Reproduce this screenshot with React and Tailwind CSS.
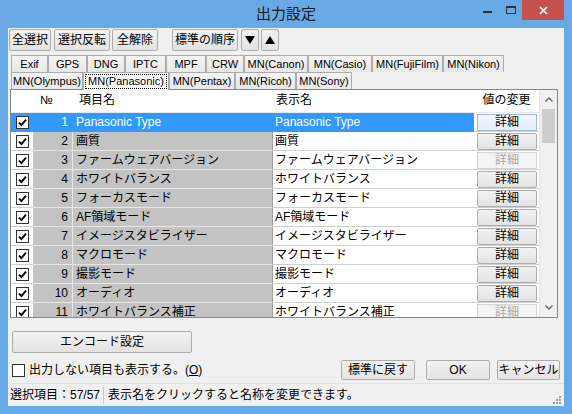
import React from "react";

const rows = [
  { no: 1, name: "Panasonic Type", selected: true },
  { no: 2, name: "画質" },
  { no: 3, name: "ファームウェアバージョン", disabled: true },
  { no: 4, name: "ホワイトバランス" },
  { no: 5, name: "フォーカスモード" },
  { no: 6, name: "AF領域モード" },
  { no: 7, name: "イメージスタビライザー" },
  { no: 8, name: "マクロモード" },
  { no: 9, name: "撮影モード" },
  { no: 10, name: "オーディオ" },
  { no: 11, name: "ホワイトバランス補正", disabled: true }
];

const tabsTop = [
  ["Exif", 37],
  ["GPS", 39],
  ["DNG", 38],
  ["IPTC", 41],
  ["MPF", 40],
  ["CRW", 38],
  ["MN(Canon)", 64],
  ["MN(Casio)", 64],
  ["MN(FujiFilm)", 71],
  ["MN(Nikon)", 61]
];

const tabsBottom = [
  ["MN(Olympus)", 72],
  ["MN(Panasonic)", 86],
  ["MN(Pentax)", 66],
  ["MN(Ricoh)", 61],
  ["MN(Sony)", 56]
];

function Btn({ className = "", children }) {
  return (
    <div
      className={`flex items-center justify-center border border-[#acacac] rounded-[2px] bg-linear-to-b from-[#f2f2f2] to-[#e3e3e3] text-black ${className}`}
    >
      {children}
    </div>
  );
}

function CheckBox({ checked }) {
  return (
    <div className="w-[13px] h-[13px] border border-[#333333] bg-white flex items-center justify-center shrink-0">
      {checked && (
        <svg width="9" height="9" viewBox="0 0 9 9">
          <path d="M1 4.6 L3.4 7 L8 1.6" stroke="#000" strokeWidth="1.9" fill="none" />
        </svg>
      )}
    </div>
  );
}

function Tab({ label, width, selected }) {
  return (
    <div
      style={{ width: width }}
      className={`shrink-0 flex items-center justify-center border-t border-l border-r border-[#acacac] text-[11px] whitespace-nowrap ${
        selected ? "bg-white relative z-10 h-[18px] -mb-[1px]" : "h-[17px] bg-linear-to-b from-[#f4f4f4] to-[#e8e8e8]"
      }`}
    >
      {selected ? (
        <span className="border border-dotted border-black px-[2px] leading-[13px]">{label}</span>
      ) : (
        label
      )}
    </div>
  );
}

export default function App() {
  return (
    <div className="w-[572px] h-[414px] bg-[#68aae6] flex flex-col font-['Liberation_Sans','Noto_Sans_CJK_JP',sans-serif] text-[12px] leading-none text-black overflow-hidden">
      {/* Title bar */}
      <div className="h-[28px] grid grid-cols-[1fr_auto_1fr] items-start">
        <div />
        <div className="pt-[6px] text-[15px] text-[#1a1a1a]">出力設定</div>
        <div className="flex justify-end items-start pr-[8px]">
          <div className="w-[26px] h-[20px] flex items-center justify-center">
            <div className="w-[9px] h-[2px] bg-[#333] mt-[4px]" />
          </div>
          <div className="w-[22px] h-[20px] flex items-center justify-center">
            <div className="w-[10px] h-[8px] border border-[#333] border-t-2" />
          </div>
          <div className="w-[42px] h-[20px] bg-[#c75050] flex items-center justify-center">
            <svg width="9" height="9" viewBox="0 0 9 9">
              <path d="M1 1 L8 8 M8 1 L1 8" stroke="#fff" strokeWidth="1.6" />
            </svg>
          </div>
        </div>
      </div>

      {/* Client area */}
      <div className="mx-[8px] h-[378px] bg-[#f0f0f0] flex flex-col">
        {/* Toolbar */}
        <div className="flex pl-[1px] pt-[1px]">
          <Btn className="w-[42px] h-[22px]">全選択</Btn>
          <Btn className="w-[56px] h-[22px] ml-[3px]">選択反転</Btn>
          <Btn className="w-[46px] h-[22px] ml-[2px]">全解除</Btn>
          <Btn className="w-[66px] h-[22px] ml-[14px]">標準の順序</Btn>
          <Btn className="w-[18px] h-[22px] ml-[3px]">
            <svg width="10" height="8" viewBox="0 0 10 8">
              <path d="M0 0 H10 L5 8 Z" fill="#000" />
            </svg>
          </Btn>
          <Btn className="w-[18px] h-[22px] ml-[2px]">
            <svg width="10" height="8" viewBox="0 0 10 8">
              <path d="M0 8 H10 L5 0 Z" fill="#000" />
            </svg>
          </Btn>
        </div>

        {/* Tabs */}
        <div className="mt-[4px] ml-[3px] flex">
          {tabsTop.map(function(t) {
            return <Tab key={t[0]} label={t[0]} width={t[1]} />;
          })}
        </div>
        <div className="ml-[3px] h-[17px] flex items-end">
          {tabsBottom.map(function(t) {
            return <Tab key={t[0]} label={t[0]} width={t[1]} selected={t[0] === "MN(Panasonic)"} />;
          })}
        </div>

        {/* List */}
        <div className="ml-[2px] w-[548px] h-[230px] border border-[#828790] bg-white flex overflow-hidden">
          <div className="w-[528px] flex flex-col overflow-hidden">
            <div className="h-[23px] shrink-0 flex items-center pb-[2px] border-b border-[#eaeaea]">
              <div className="w-[22px]" />
              <div className="w-[40px] pl-[7px]">№</div>
              <div className="w-[200px] pl-[6px]">項目名</div>
              <div className="w-[201px] pl-[3px]">表示名</div>
              <div className="w-[65px] text-center">値の変更</div>
            </div>
            {rows.map(function(r) {
              const sel = r.selected;
              return (
                <div key={r.no} className="h-[19px] shrink-0 flex">
                  <div
                    className={`w-[22px] flex items-center pl-[5px] border-b ${
                      sel ? "bg-[#3399ff] border-[#3399ff]" : "bg-white border-[#d0d0d0]"
                    }`}
                  >
                    <CheckBox checked />
                  </div>
                  <div
                    className={`w-[40px] flex items-center justify-end pr-[4px] border-r border-b ${
                      sel ? "bg-[#3399ff] text-white border-[#3399ff]" : "bg-[#c3c3c3] border-[#e6e6e6]"
                    }`}
                  >
                    {r.no}
                  </div>
                  <div
                    className={`w-[200px] flex items-center pl-[3px] border-r border-b whitespace-nowrap ${
                      sel ? "bg-[#3399ff] text-white border-[#3399ff]" : "bg-[#c3c3c3] border-[#e6e6e6] border-r-[#a0a0a0]"
                    }`}
                  >
                    {r.name}
                  </div>
                  <div
                    className={`w-[201px] flex items-center pl-[2px] border-b whitespace-nowrap ${
                      sel ? "bg-[#3399ff] text-white border-[#3399ff]" : "bg-white border-[#d0d0d0]"
                    }`}
                  >
                    {r.name}
                  </div>
                  <div className="w-[65px] flex items-center pl-[3px] border-b border-[#d0d0d0] bg-white">
                    {r.disabled ? (
                      <div className="w-[60px] h-[17px] flex items-center justify-center border border-[#d5d5d5] bg-[#f4f4f4] text-[#a8a8a8]">
                        詳細
                      </div>
                    ) : sel ? (
                      <div className="w-[60px] h-[17px] flex items-center justify-center border border-[#9fb5cc] bg-linear-to-b from-[#f3f8fd] to-[#e2edf8]">
                        詳細
                      </div>
                    ) : (
                      <Btn className="w-[60px] h-[17px]">詳細</Btn>
                    )}
                  </div>
                </div>
              );
            })}
          </div>

          {/* Scrollbar */}
          <div className="w-[18px] bg-[#f0f0f0] border-l border-[#e4e4e4] flex flex-col items-center">
            <div className="h-[19px] w-full flex items-center justify-center">
              <svg width="8" height="5" viewBox="0 0 8 5">
                <path d="M0.5 4.5 L4 1 L7.5 4.5" stroke="#606060" strokeWidth="1.3" fill="none" />
              </svg>
            </div>
            <div className="w-[13px] h-[34px] bg-[#cdcdcd]" />
            <div className="flex-1" />
            <div className="h-[19px] w-full flex items-center justify-center">
              <svg width="8" height="5" viewBox="0 0 8 5">
                <path d="M0.5 0.5 L4 4 L7.5 0.5" stroke="#606060" strokeWidth="1.3" fill="none" />
              </svg>
            </div>
          </div>
        </div>

        {/* Encode button */}
        <Btn className="mt-[13px] ml-[4px] w-[180px] h-[22px]">エンコード設定</Btn>

        {/* Options row */}
        <div className="mt-[7px] h-[20px] flex items-center">
          <div className="ml-[4px] flex items-center">
            <div className="w-[13px] h-[13px] border border-[#333333] bg-white" />
            <span className="ml-[4px]">
              出力しない項目も表示する。(<span className="underline">O</span>)
            </span>
          </div>
          <div className="flex-1" />
          <Btn className="w-[74px] h-[20px]">標準に戻す</Btn>
          <Btn className="w-[64px] h-[20px] ml-[11px]">OK</Btn>
          <Btn className="w-[63px] h-[20px] ml-[7px] mr-[4px]">キャンセル</Btn>
        </div>

        {/* Status bar */}
        <div className="mt-[3px] h-[23px] flex items-center border-t border-[#e2e2e2]">
          <div className="w-[95px] pl-[2px]">選択項目：57/57</div>
          <div className="w-[1px] h-[17px] bg-[#c8c8c8]" />
          <div className="pl-[4px] flex-1">表示名をクリックすると名称を変更できます。</div>
          <div className="self-end mb-[2px] mr-[3px] grid grid-cols-3 gap-[1px]">
            <div />
            <div />
            <div className="w-[2px] h-[2px] bg-[#a0a0a0]" />
            <div />
            <div className="w-[2px] h-[2px] bg-[#a0a0a0]" />
            <div className="w-[2px] h-[2px] bg-[#a0a0a0]" />
            <div className="w-[2px] h-[2px] bg-[#a0a0a0]" />
            <div className="w-[2px] h-[2px] bg-[#a0a0a0]" />
            <div className="w-[2px] h-[2px] bg-[#a0a0a0]" />
          </div>
        </div>
      </div>
    </div>
  );
}
